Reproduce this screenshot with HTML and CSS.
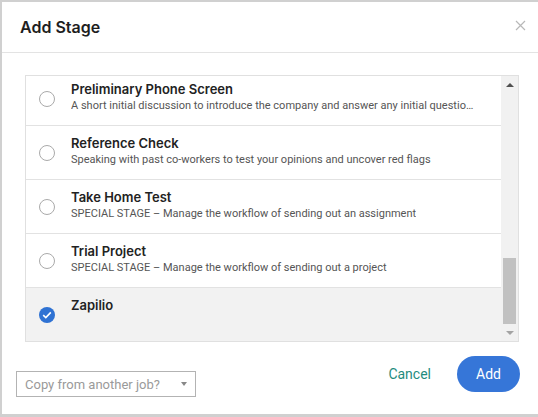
FILE: index.html
```html
<!DOCTYPE html>
<html lang="en">
<head>
    <meta charset="UTF-8">
    <title>Add Stage</title>
    <link rel="stylesheet" href="styles.css">
</head>
<body>
    <div class="dialog">
        <div class="dialog-header">
            <h2>Add Stage</h2>
            <svg class="close" width="11" height="11" viewBox="0 0 11 11">
                <path d="M1 1 L10 10 M10 1 L1 10" stroke="#b8b8b8" stroke-width="1.2"/>
            </svg>
        </div>

        <div class="dialog-body">
            <div class="stage-list">
                <div class="stage-items">
                    <div class="stage"><span class="radio"></span><div class="stage-text"><div class="stage-name">Preliminary Phone Screen</div><div class="stage-desc">A short initial discussion to introduce the company and answer any initial questions the candidate may have</div></div></div>
                    <div class="stage"><span class="radio"></span><div class="stage-text"><div class="stage-name">Reference Check</div><div class="stage-desc">Speaking with past co-workers to test your opinions and uncover red flags</div></div></div>
                    <div class="stage"><span class="radio"></span><div class="stage-text"><div class="stage-name">Take Home Test</div><div class="stage-desc">SPECIAL STAGE – Manage the workflow of sending out an assignment</div></div></div>
                    <div class="stage"><span class="radio"></span><div class="stage-text"><div class="stage-name">Trial Project</div><div class="stage-desc">SPECIAL STAGE – Manage the workflow of sending out a project</div></div></div>
                    <div class="stage selected">
                        <span class="radio checked">
                            <svg width="10" height="8" viewBox="0 0 10 8"><path d="M1.2 4.2 L3.8 6.6 L8.8 1.4" fill="none" stroke="#fff" stroke-width="1.6"/></svg>
                        </span>
                        <div class="stage-text"><div class="stage-name">Zapilio</div></div>
                    </div>
                </div>
                <div class="scrollbar">
                    <span class="arrow arrow-up"></span>
                    <div class="track"><div class="thumb"></div></div>
                    <span class="arrow arrow-down"></span>
                </div>
            </div>
        </div>

        <div class="dialog-footer">
            <div class="copy-select">
                <span>Copy from another job?</span>
                <span class="caret"></span>
            </div>
            <div class="actions">
                <button class="cancel-button">Cancel</button>
                <button class="add-button">Add</button>
            </div>
        </div>
    </div>
</body>
</html>
```

FILE: styles.css
```css
* {
    margin: 0;
    padding: 0;
    box-sizing: border-box;
}

body {
    font-family: 'Inter', 'Liberation Sans', sans-serif;
    background-color: #d0d0d0;
    color: #222;
}

.dialog {
    margin: 2px 0 0 2px;
    width: 536px;
    height: 412px;
    background-color: #fff;
    display: flex;
    flex-direction: column;
}

.dialog-header {
    height: 51px;
    border-bottom: 1px solid #e3e3e3;
    display: flex;
    align-items: center;
    justify-content: space-between;
    padding: 0 12px 0 18px;
}

.dialog-header h2 {
    font-size: 16px;
    font-weight: 600;
    color: #1e1e1e;
}

.close {
    margin-top: -4px;
}

.dialog-body {
    padding: 22px 19px 0 23px;
}

.stage-list {
    height: 267px;
    border: 1px solid #e0e0e0;
    display: flex;
    overflow: hidden;
}

.stage-items {
    flex: 1;
    min-width: 0;
    overflow: hidden;
}

.stage {
    height: 54px;
    border-bottom: 1px solid #e2e2e2;
    display: flex;
    align-items: center;
    padding: 0 26px 0 13px;
}

.stage:first-child {
    margin-top: -4px;
}

.stage:last-child {
    border-bottom: none;
    height: 53px;
}

.stage.selected {
    background-color: #f2f2f2;
}

.radio {
    flex: none;
    width: 16px;
    height: 16px;
    border: 1px solid #aaa;
    border-radius: 50%;
    background-color: #fff;
    margin-right: 16px;
    display: flex;
    align-items: center;
    justify-content: center;
}

.radio.checked {
    border: none;
    background-color: #2f72d3;
}

.stage-text {
    align-self: flex-start;
    padding-top: 8px;
    min-width: 0;
}

.stage-name {
    font-size: 13px;
    font-weight: 600;
    line-height: 18px;
    color: #222;
}

.stage-desc {
    font-family: 'Roboto', 'Liberation Sans', sans-serif;
    font-size: 11px;
    line-height: 16px;
    color: #555;
    white-space: nowrap;
    overflow: hidden;
    text-overflow: ellipsis;
}

.scrollbar {
    flex: none;
    width: 17px;
    background-color: #f1f1f1;
    display: flex;
    flex-direction: column;
    align-items: center;
}

.arrow {
    flex: none;
    height: 17px;
    display: flex;
    align-items: center;
    justify-content: center;
}

.arrow::before {
    content: '';
    border-left: 4px solid transparent;
    border-right: 4px solid transparent;
}

.arrow-up::before {
    border-bottom: 4px solid #505050;
}

.arrow-down::before {
    border-top: 4px solid #a3a3a3;
}

.track {
    flex: 1;
    width: 100%;
    display: flex;
    flex-direction: column;
    justify-content: flex-end;
    padding: 0 2px;
}

.thumb {
    height: 66px;
    background-color: #c1c1c1;
}

.dialog-footer {
    display: flex;
    justify-content: space-between;
    align-items: flex-start;
    padding: 14px 18px 0 14px;
}

.copy-select {
    margin-top: 15px;
    width: 180px;
    height: 26px;
    border: 1px solid #b3b3b3;
    display: flex;
    align-items: center;
    justify-content: space-between;
    padding: 0 8px 0 8px;
    font-family: 'Roboto', 'Liberation Sans', sans-serif;
    font-size: 13px;
    color: #9a9a9a;
}

.caret {
    border-left: 3px solid transparent;
    border-right: 3px solid transparent;
    border-top: 4px solid #888;
}

.actions {
    display: flex;
    align-items: center;
    gap: 26px;
}

.cancel-button {
    background: none;
    border: none;
    font-family: 'Roboto', 'Liberation Sans', sans-serif;
    font-size: 14px;
    color: #1f8c7e;
    cursor: pointer;
}

.add-button {
    width: 63px;
    height: 36px;
    border: none;
    border-radius: 18px;
    background-color: #3676d8;
    color: #fff;
    font-family: 'Roboto', 'Liberation Sans', sans-serif;
    font-size: 14px;
    cursor: pointer;
}
```
